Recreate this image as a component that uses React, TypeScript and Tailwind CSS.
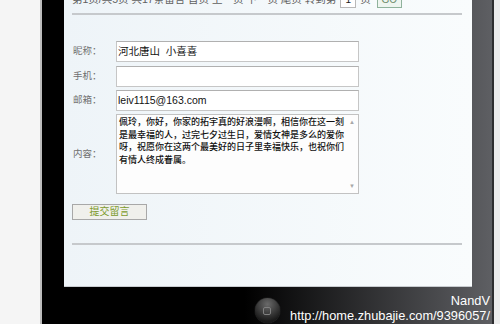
const cjk = "font-['Liberation_Sans','Noto_Sans_CJK_SC',sans-serif]";

const lines = [
  "佩玲，你好，你家的拓宇真的好浪漫啊，相信你在这一刻",
  "是最幸福的人，过完七夕过生日，爱情女神是多么的爱你",
  "呀，祝愿你在这两个最美好的日子里幸福快乐，也祝你们",
  "有情人终成眷属。",
];

function Field({ label, value }: { label: string; value?: string }) {
  return (
    <div className="flex items-center">
      <span className="w-[44px] pl-[1px] text-[9.5px] text-[#707070]">{label}</span>
      <div className="h-[21px] w-[243px] whitespace-pre border border-[#c6c6c6] border-t-[#b0b0b0] bg-white pl-[1px] pt-[2px] text-[10.5px] leading-[14px] text-[#111]">
        {value}
      </div>
    </div>
  );
}

export default function App() {
  return (
    <div className={`relative flex h-[324px] w-[500px] overflow-hidden bg-[#f5f5f5] ${cjk}`}>
      <div className="w-[40px] shrink-0 bg-[#f5f5f5]" />
      <div className="w-[2px] shrink-0 bg-[#bcbcbc]" />

      {/* device */}
      <div className="flex w-[450px] shrink-0 flex-col bg-[linear-gradient(to_right,#000_0%,#000_45%,#5e5f63_100%)]">
        <div className="flex h-[287px] shrink-0">
          <div className="w-[22px] shrink-0" />
          <div className="w-[408px] shrink-0 border-b border-[#c8ccd0] bg-[linear-gradient(to_right,#eef4f8,#f9fcfd)] pl-[8px] pr-[10px]">
            {/* pager row, cut off by the top edge of the shot */}
            <div className="-mt-[10px] flex h-[20px] items-center whitespace-nowrap text-[10.5px] text-[#606060]">
              <span>第1页/共5页 共17条留言 首页 上一页 下一页 尾页 转到第</span>
              <span className="ml-[4px] h-[16px] w-[16px] border border-[#b8b8b8] bg-white text-center text-[10px] leading-[14px] text-[#222]">
                1
              </span>
              <span className="ml-[4px]">页</span>
              <span className="ml-[6px] h-[16px] w-[25px] border border-[#8fb29c] bg-[#eef5f0] text-center text-[10px] leading-[14px] text-[#6a8a6a]">
                GO
              </span>
            </div>
            <div className="mt-[3px] h-[2px] bg-[#c6c9cc]" />

            <div className="mt-[26px]">
              <Field label="昵称：" value="河北唐山  小喜喜" />
            </div>
            <div className="mt-[4px]">
              <Field label="手机：" />
            </div>
            <div className="mt-[3px]">
              <Field label="邮箱：" value="leiv1115@163.com" />
            </div>
            <div className="mt-[3px] flex items-center">
              <span className="w-[44px] pl-[1px] text-[9.5px] text-[#707070]">内容：</span>
              <div className="flex h-[80px] w-[243px] border border-[#c2c2c2] bg-[#fdfdfd]">
                <div className="flex-1 whitespace-nowrap pl-[2px] pt-[1px] text-[9px] font-medium leading-[12.5px] text-[#111]">
                  {lines.map((l) => (
                    <div key={l}>{l}</div>
                  ))}
                </div>
                <div className="flex w-[12px] flex-col items-center justify-between py-[3px] text-[6px] leading-[8px] text-[#a8a8a8]">
                  <span>▲</span>
                  <span>▼</span>
                </div>
              </div>
            </div>

            <button className="mt-[10px] block h-[16px] w-[75px] border border-[#a8a8a8] bg-[#f0f0ec] text-[10px] leading-[14px] text-[#7c9a2c]">
              提交留言
            </button>

            <div className="mt-[23px] h-[2px] bg-[#c6c9cc]" />
          </div>
          <div className="w-[20px] shrink-0" />
        </div>

        {/* bottom bezel with home button */}
        <div className="flex flex-1 justify-center pt-[11px]">
          <div className="flex h-[25px] w-[25px] items-center justify-center rounded-full bg-[radial-gradient(circle_at_50%_25%,#6a6a6a,#1a1a1a_75%)] shadow-[0_0_1px_#666]">
            <div className="h-[8px] w-[8px] rounded-[2px] border border-[#808080]" />
          </div>
        </div>
      </div>

      <div className="w-[2px] shrink-0 bg-[#2e2e30]" />
      <div className="flex-1 bg-[#ececec]" />

      {/* watermark */}
      <div className="absolute bottom-[1px] right-[10px] text-right font-['Liberation_Sans',sans-serif] text-[12.8px] leading-[15px] text-white">
        <div>NandV</div>
        <div>http://home.zhubajie.com/9396057/</div>
      </div>
    </div>
  );
}
